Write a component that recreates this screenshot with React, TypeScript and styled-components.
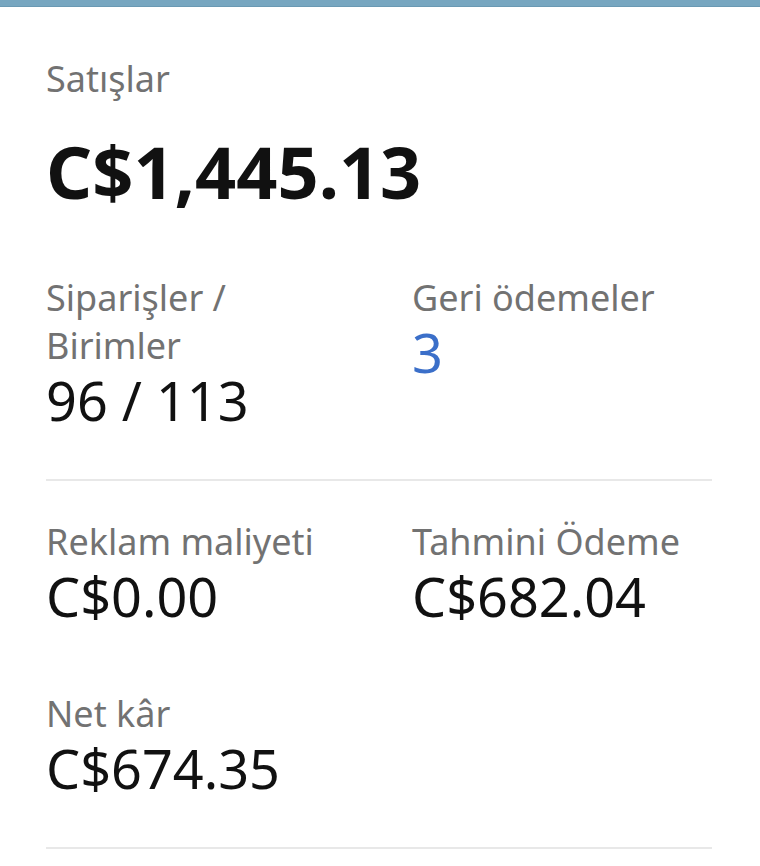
import styled, { createGlobalStyle } from 'styled-components';

const GlobalStyle = createGlobalStyle`
    html, body {
        margin: 0;
        padding: 0;
        background: #ffffff;
    }
    body {
        font-family: "Noto Sans", "Open Sans", sans-serif;
        -webkit-font-smoothing: antialiased;
    }
`;

interface Metric {
    label: string;
    value: string;
    highlight?: boolean;
}

const topMetrics: Metric[] = [
    { label: 'Siparişler / Birimler', value: '96 / 113' },
    { label: 'Geri ödemeler', value: '3', highlight: true },
];

const bottomMetrics: Metric[] = [
    { label: 'Reklam maliyeti', value: 'C$0.00' },
    { label: 'Tahmini Ödeme', value: 'C$682.04' },
    { label: 'Net kâr', value: 'C$674.35' },
];

export default function App() {
    return (
        <>
            <GlobalStyle />
            <Page>
                <TopBar />
                <Card>
                    <Section>
                        <Label>Satışlar</Label>
                        <TotalValue>C$1,445.13</TotalValue>
                        <MetricGrid>
                            {topMetrics.map((m) => (
                                <MetricItem key={m.label}>
                                    <Label>{m.label}</Label>
                                    <Value $highlight={m.highlight}>{m.value}</Value>
                                </MetricItem>
                            ))}
                        </MetricGrid>
                    </Section>
                    <Section $compact>
                        <MetricGrid>
                            {bottomMetrics.map((m) => (
                                <MetricItem key={m.label}>
                                    <Label>{m.label}</Label>
                                    <Value $highlight={m.highlight}>{m.value}</Value>
                                </MetricItem>
                            ))}
                        </MetricGrid>
                    </Section>
                </Card>
            </Page>
        </>
    );
}

const Page = styled.div`
    width: 100%;
    min-height: 866px;
    background: #ffffff;
`;

const TopBar = styled.div`
    height: 7px;
    background: #77a6c0;
    border-bottom: 1px solid #6a99b3;
    box-sizing: border-box;
`;

const Card = styled.div`
    padding: 48px 48px 0 46px;
`;

const Section = styled.section<{ $compact?: boolean }>`
    padding-top: ${(p) => (p.$compact ? '37px' : '0')};
    padding-bottom: ${(p) => (p.$compact ? '48px' : '48px')};
    border-bottom: 2px solid #e8e8e8;
`;

const Label = styled.div`
    font-size: 36px;
    line-height: 48px;
    color: #727272;
`;

const TotalValue = styled.div`
    margin-top: 28px;
    margin-bottom: 63px;
    font-size: 72px;
    line-height: 80px;
    font-weight: 700;
    color: #111111;
`;

const MetricGrid = styled.div`
    display: grid;
    grid-template-columns: 1fr 1fr;
    column-gap: 66px;
    row-gap: 63px;
`;

const MetricItem = styled.div`
    display: flex;
    flex-direction: column;
`;

const Value = styled.div<{ $highlight?: boolean }>`
    font-size: 54px;
    line-height: 61px;
    color: ${(p) => (p.$highlight ? '#3b6fc9' : '#111111')};
`;
